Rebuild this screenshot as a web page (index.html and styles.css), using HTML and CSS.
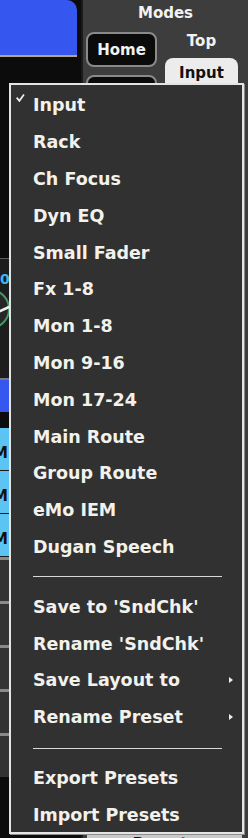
FILE: index.html
```html
<!DOCTYPE html>
<html>
<head>
  <title>Layout Modes</title>
  <link rel="stylesheet" href="styles.css">
</head>
<body>

<div class="console">
  <div class="strip">
    <div class="screen"></div>
    <div class="screen-edge"></div>
    <div class="strip-black"></div>
    <div class="gain">
      <span class="gain-val">0</span>
      <svg class="knob" width="12" height="44" viewBox="0 0 12 44">
        <circle cx="-10" cy="22" r="19" fill="#262626" stroke="#3f9a68" stroke-width="2"/>
        <line x1="-2" y1="25" x2="9" y2="20" stroke="#eeeeee" stroke-width="2.5" stroke-linecap="round"/>
      </svg>
    </div>
    <div class="sel-bar"></div>
    <div class="strip-gap"></div>
    <div class="route-cell"><span>M</span></div>
    <div class="route-cell"><span>M</span></div>
    <div class="route-cell"><span>M</span></div>
    <div class="slot"></div>
    <div class="slot"></div>
    <div class="slot"></div>
    <div class="slot"></div>
    <div class="slot"></div>
  </div>

  <div class="modes">
    <div class="modes-title">Modes</div>
    <div class="modes-row">
      <div class="mode-col">
        <div class="mode-btn">Home</div>
        <div class="mode-btn"></div>
      </div>
      <div class="tab-col">
        <div class="tab-label">Top</div>
        <div class="tab">Input</div>
      </div>
    </div>
    <div class="modes-fill"></div>
    <div class="preset-btn">Presets</div>
  </div>
</div>

<div class="menu">
  <div class="menu-item"><svg class="check" width="17" height="16" viewBox="0 0 17 16"><polyline points="0.6,3.6 3.4,6.8 8,0.6" fill="none" stroke="#f3f1ec" stroke-width="1.7"/></svg><span class="label">Input</span></div>
  <div class="menu-item"><span class="check"></span><span class="label">Rack</span></div>
  <div class="menu-item"><span class="check"></span><span class="label">Ch Focus</span></div>
  <div class="menu-item"><span class="check"></span><span class="label">Dyn EQ</span></div>
  <div class="menu-item"><span class="check"></span><span class="label">Small Fader</span></div>
  <div class="menu-item"><span class="check"></span><span class="label">Fx 1-8</span></div>
  <div class="menu-item"><span class="check"></span><span class="label">Mon 1-8</span></div>
  <div class="menu-item"><span class="check"></span><span class="label">Mon 9-16</span></div>
  <div class="menu-item"><span class="check"></span><span class="label">Mon 17-24</span></div>
  <div class="menu-item"><span class="check"></span><span class="label">Main Route</span></div>
  <div class="menu-item"><span class="check"></span><span class="label">Group Route</span></div>
  <div class="menu-item"><span class="check"></span><span class="label">eMo IEM</span></div>
  <div class="menu-item"><span class="check"></span><span class="label">Dugan Speech</span></div>
  <div class="menu-sep"></div>
  <div class="menu-item"><span class="check"></span><span class="label">Save to 'SndChk'</span></div>
  <div class="menu-item"><span class="check"></span><span class="label">Rename 'SndChk'</span></div>
  <div class="menu-item"><span class="check"></span><span class="label">Save Layout to</span><span class="sub-arrow"></span></div>
  <div class="menu-item"><span class="check"></span><span class="label">Rename Preset</span><span class="sub-arrow"></span></div>
  <div class="menu-sep wide"></div>
  <div class="menu-item"><span class="check"></span><span class="label">Export Presets</span></div>
  <div class="menu-item"><span class="check"></span><span class="label">Import Presets</span></div>
</div>

</body>
</html>
```

FILE: styles.css
```css
body {
  margin: 0;
  background-color: #0c0c0c;
  font-family: "DejaVu Sans", sans-serif;
  font-weight: bold;
}

.console {
  display: flex;
  height: 838px;
  overflow: hidden;
}

/* left channel strip, mostly hidden by the menu */
.strip {
  width: 81px;
  flex: none;
  display: flex;
  flex-direction: column;
  background-color: #0c0c0c;
}

.screen {
  height: 55px;
  width: 77px;
  background-color: #3557ef;
  border-top-right-radius: 10px;
}

.screen-edge {
  height: 2px;
  width: 77px;
  background-color: #b3a58a;
}

.strip-black {
  height: 201px;
}

.gain {
  height: 119px;
  border-top: 1px solid #5c5c5c;
  background-color: #1d1d1d;
}

.gain-val {
  display: block;
  margin-top: 13px;
  color: #3cb6ef;
  font-size: 14px;
  line-height: 14px;
}

.knob {
  display: block;
  margin-top: 1px;
}

.sel-bar {
  height: 32px;
  border-top: 2px solid #7a7a7a;
  background-color: #3557ef;
}

.strip-gap {
  height: 16px;
}

.route-cell {
  height: 43px;
  border-bottom: 1px solid #1b1b1b;
  background-color: #5cc4f2;
  color: #111;
  font-size: 15px;
  display: flex;
  align-items: center;
  padding-top: 8px;
  box-sizing: border-box;
}

.route-cell span {
  margin-left: -7px;
}

.slot {
  height: 41px;
  border-top: 3px solid #8a8a8a;
  background-color: #333;
}

.slot:first-of-type {
  height: 32px;
}

/* right side: mode buttons */
.modes {
  flex: 1;
  display: flex;
  flex-direction: column;
  background-color: #3d3d3d;
  border-left: 2px solid #1a1a1a;
}

.modes-title {
  text-align: center;
  color: #f2f2f2;
  font-size: 15px;
  line-height: 15px;
  padding-top: 6px;
  height: 26px;
}

.modes-row {
  display: flex;
  gap: 8px;
  padding-left: 3px;
}

.mode-col {
  display: flex;
  flex-direction: column;
  gap: 8px;
}

.mode-btn {
  width: 71px;
  height: 35px;
  box-sizing: border-box;
  border: 2px solid #8a8a8a;
  border-radius: 8px;
  background-color: #0b0b0b;
  color: #f2f2f2;
  font-size: 15px;
  display: flex;
  align-items: center;
  justify-content: center;
}

.tab-col {
  display: flex;
  flex-direction: column;
  align-items: center;
  width: 73px;
}

.tab-label {
  color: #f2f2f2;
  font-size: 15px;
  line-height: 15px;
  height: 24px;
  padding-top: 2px;
}

.tab {
  width: 73px;
  height: 40px;
  border-radius: 8px 8px 0 0;
  background-color: #ececec;
  color: #111;
  font-size: 15px;
  text-align: center;
  padding-top: 6px;
  box-sizing: border-box;
}

.modes-fill {
  flex: 1;
}

.preset-btn {
  height: 30px;
  margin: 0 6px -27px 4px;
  background-color: #c9c9c9;
  color: #111;
  font-size: 15px;
  text-align: center;
  padding-top: 1px;
}

/* popup menu */
.menu {
  position: absolute;
  left: 9px;
  top: 83px;
  width: 235px;
  height: 751px;
  box-sizing: border-box;
  border: 2px solid #e4e4e4;
  box-shadow: 1px 1px 0 #8c8c8c;
  background-color: #313131;
  padding-top: 2px;
}

.menu-item {
  height: 36.8px;
  display: flex;
  align-items: center;
  padding: 0 9px 0 5px;
  color: #f3f1ec;
  font-size: 17.5px;
}

.check {
  width: 17px;
  height: 16px;
  flex: none;
  align-self: center;
  margin-top: -7px;
}

.label {
  flex: 1;
  white-space: nowrap;
}

.sub-arrow {
  width: 0;
  height: 0;
  border-left: 4px solid #f0f0f0;
  border-top: 3.5px solid transparent;
  border-bottom: 3.5px solid transparent;
}

.menu-sep {
  height: 1px;
  margin: 11px 20px 11px 22px;
  background-color: #d8d8d8;
}

.menu-sep.wide {
  margin-top: 12px;
}
```
